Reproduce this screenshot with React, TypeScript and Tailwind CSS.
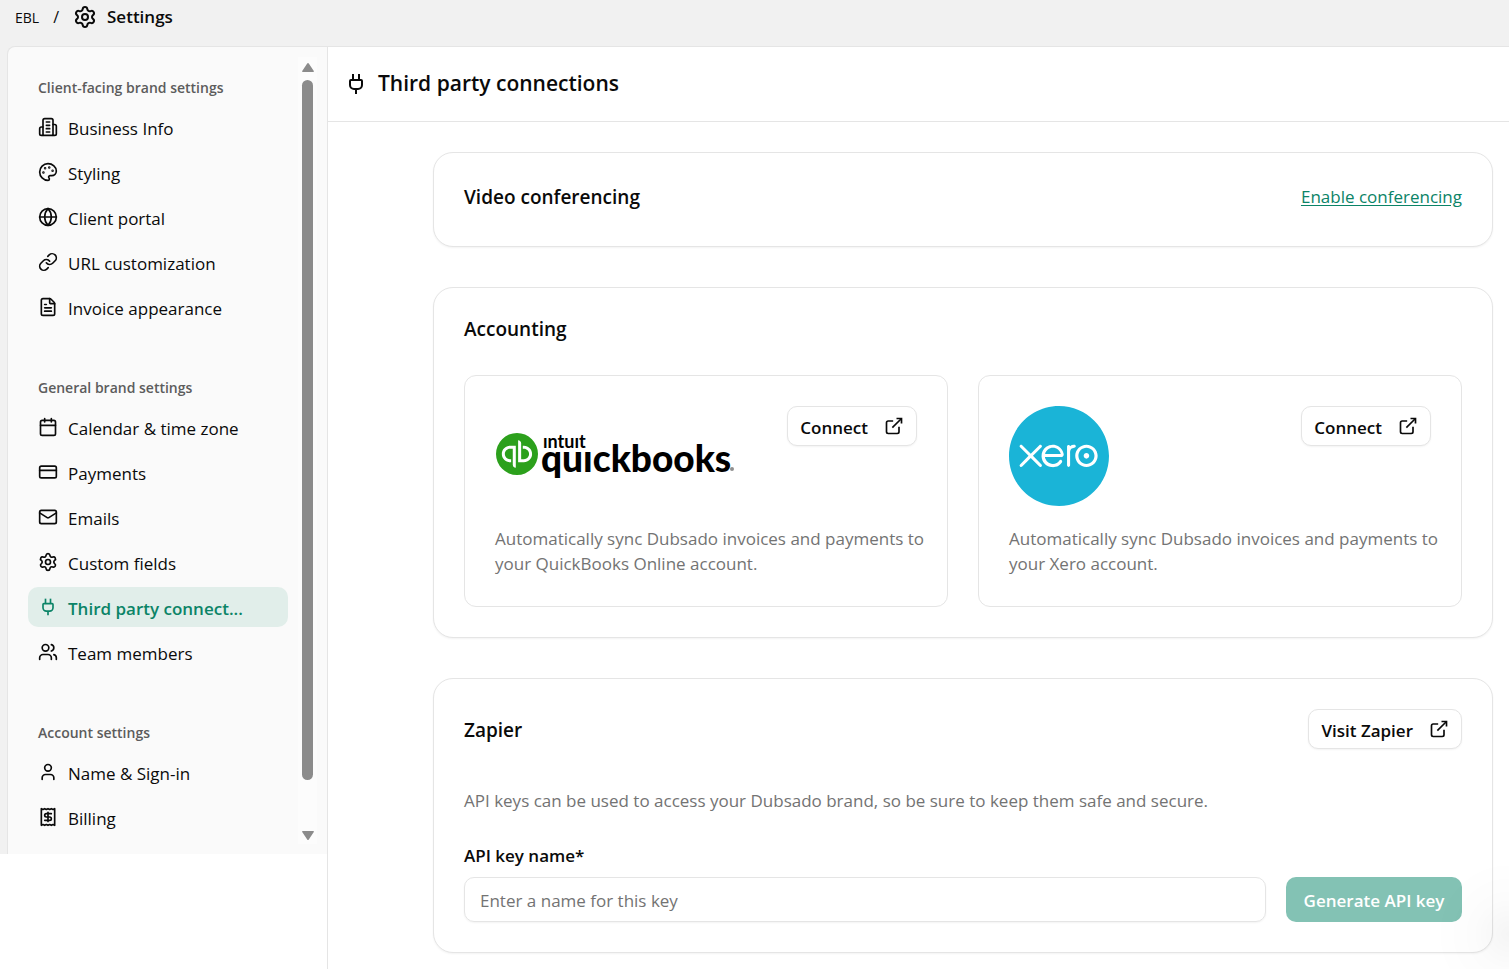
import { useState } from "react";
import {
  Calendar,
  CreditCard,
  ExternalLink,
  FileText,
  Globe,
  Link,
  Mail,
  Plug,
  Receipt,
  Settings,
  User,
  Users,
  type LucideProps,
} from "lucide-react";
import { SiQuickbooks, SiXero } from "react-icons/si";

type NavItem = { name: string; icon: React.ComponentType<LucideProps> };
type NavGroup = { title: string; items: NavItem[] };

const BuildingIcon = ({ className }: LucideProps) => (
  <svg
    viewBox="0 0 24 24"
    fill="none"
    stroke="currentColor"
    strokeWidth="2"
    strokeLinecap="round"
    strokeLinejoin="round"
    className={className}
  >
    <path d="M6 22V4a2 2 0 0 1 2-2h8a2 2 0 0 1 2 2v18Z" />
    <path d="M6 12H4a2 2 0 0 0-2 2v6a2 2 0 0 0 2 2h2" />
    <path d="M18 9h2a2 2 0 0 1 2 2v9a2 2 0 0 1-2 2h-2" />
    <path d="M10 6h4M10 10h4M10 14h4M10 18h4" />
  </svg>
);

const PaletteIcon = ({ className }: LucideProps) => (
  <svg
    viewBox="0 0 24 24"
    fill="none"
    stroke="currentColor"
    strokeWidth="2"
    strokeLinecap="round"
    strokeLinejoin="round"
    className={className}
  >
    <circle cx="13.5" cy="6.5" r=".5" fill="currentColor" />
    <circle cx="17.5" cy="10.5" r=".5" fill="currentColor" />
    <circle cx="8.5" cy="7.5" r=".5" fill="currentColor" />
    <circle cx="6.5" cy="12.5" r=".5" fill="currentColor" />
    <path d="M12 2C6.5 2 2 6.5 2 12s4.5 10 10 10c.926 0 1.648-.746 1.648-1.688 0-.437-.18-.835-.437-1.125-.29-.289-.438-.652-.438-1.125a1.64 1.64 0 0 1 1.668-1.668h1.996c3.051 0 5.555-2.503 5.555-5.554C21.965 6.012 17.461 2 12 2z" />
  </svg>
);

const navGroups: NavGroup[] = [
  {
    title: "Client-facing brand settings",
    items: [
      { name: "Business Info", icon: BuildingIcon },
      { name: "Styling", icon: PaletteIcon },
      { name: "Client portal", icon: Globe },
      { name: "URL customization", icon: Link },
      { name: "Invoice appearance", icon: FileText },
    ],
  },
  {
    title: "General brand settings",
    items: [
      { name: "Calendar & time zone", icon: Calendar },
      { name: "Payments", icon: CreditCard },
      { name: "Emails", icon: Mail },
      { name: "Custom fields", icon: Settings },
      { name: "Third party connect...", icon: Plug },
      { name: "Team members", icon: Users },
    ],
  },
  {
    title: "Account settings",
    items: [
      { name: "Name & Sign-in", icon: User },
      { name: "Billing", icon: Receipt },
    ],
  },
];

const ACTIVE = "Third party connect...";

const Sidebar = () => (
  <aside className="flex rounded-tl-lg border-l border-t border-[#e5e5e5] bg-[#fafafa] py-[10px] pl-5 pr-[10px]">
    <nav className="flex min-w-0 flex-1 flex-col gap-[51px] pb-[7px] pt-[21px]">
      {navGroups.map((group) => (
        <div key={group.title}>
          <h3 className="mb-[9px] pl-[10px] text-[14px] font-semibold leading-5 text-[#5c5c5c]">
            {group.title}
          </h3>
          <ul className="flex flex-col gap-[5px]">
            {group.items.map(({ name, icon: Icon }) => (
              <li key={name}>
                <a
                  href="#"
                  className={`flex h-10 items-center gap-[10px] rounded-[10px] px-[10px] text-[17px] ${
                    name === ACTIVE ? "bg-[#e1eeea] font-semibold text-[#0b8467]" : "text-[#0a0a0a]"
                  }`}
                >
                  <Icon
                    className="size-5 shrink-0"
                    strokeLinecap={Icon === Plug ? "butt" : "round"}
                    strokeLinejoin={Icon === Plug ? "miter" : "round"}
                  />
                  <span className="whitespace-nowrap pt-1">{name}</span>
                </a>
              </li>
            ))}
          </ul>
        </div>
      ))}
    </nav>

    {/* Scroll track */}
    <div className="ml-[10px] flex w-[19px] shrink-0 flex-col items-center bg-[#fcfcfc] pb-1 pt-[6px]">
      <svg viewBox="0 0 12 9" className="h-[9px] w-3 fill-[#8b8b8b]">
        <path d="M6.8.6 11.8 8a.7.7 0 0 1-.6 1H.8a.7.7 0 0 1-.6-1L5.2.6a1 1 0 0 1 1.6 0Z" />
      </svg>
      <div className="mb-[51px] mt-[8px] w-[11px] flex-1 rounded-full bg-[#8b8b8b]" />
      <svg viewBox="0 0 12 9" className="h-[9px] w-3 fill-[#8b8b8b]">
        <path d="M6.8 8.4 11.8 1a.7.7 0 0 0-.6-1H.8a.7.7 0 0 0-.6 1L5.2 8.4a1 1 0 0 0 1.6 0Z" />
      </svg>
    </div>
  </aside>
);

const Card = ({ children }: { children: React.ReactNode }) => (
  <section className="rounded-[20px] border border-[#e5e5e5] bg-white p-[30px] shadow-[0_1px_2px_rgba(0,0,0,0.05)]">
    {children}
  </section>
);

const OutlineButton = ({ label }: { label: string }) => (
  <button className="flex h-10 shrink-0 items-center gap-4 rounded-[10px] border border-[#e5e5e5] bg-white px-3 text-[17px] font-semibold shadow-[0_1px_2px_rgba(0,0,0,0.05)]">
    <span className="pt-1">{label}</span>
    <ExternalLink className="size-5" strokeLinecap="butt" strokeLinejoin="miter" />
  </button>
);

const QuickbooksLogo = () => (
  <div className="flex h-[100px] items-center pb-1">
    <SiQuickbooks className="ml-px size-[42px] shrink-0 text-[#2ca01c]" />
    <svg viewBox="0 0 198 54" className="h-[54px] w-[198px]" aria-label="Intuit QuickBooks">
      <text x="5" y="21" className="font-['Lato'] text-[18px] font-bold">ıntuıt</text>
      <text x="3" y="45" className="font-['Lato'] text-[37px] font-black">quıckbooks</text>
      <circle cx="194" cy="42" r="2" fill="#8f8f8f" />
    </svg>
  </div>
);

const XeroLogo = () => <SiXero className="size-[100px] text-[#1ab4d7]" />;

type IntegrationProps = { logo: React.ReactNode; text: string };

const Integration = ({ logo, text }: IntegrationProps) => (
  <div className="flex flex-col gap-5 rounded-xl border border-[#e5e5e5] py-[30px] pl-[30px] pr-4">
    <div className="flex items-start justify-between pr-[14px]">
      {logo}
      <OutlineButton label="Connect" />
    </div>
    <p className="text-[17px] leading-[25px] text-[#737373]">{text}</p>
  </div>
);

const App = () => {
  const [keyName, setKeyName] = useState("");

  return (
    <div className="min-h-screen bg-white font-['Open_Sans',sans-serif] text-[#0a0a0a]">
      <header className="flex h-[46px] items-center bg-[#f1f1f1] pb-3 pl-[15px]">
        <a href="#" className="text-[14px]">EBL</a>
        <span className="px-[14px] text-[16px]">/</span>
        <Settings className="size-6" />
        <h1 className="pl-[10px] text-[17px] font-semibold">Settings</h1>
      </header>

      <div className="flex min-h-[calc(100vh-46px)]">
        <div className="w-[328px] shrink-0 border-r border-[#e5e5e5]">
          <div className="bg-[#f1f1f1] pl-[7px]">
            <Sidebar />
          </div>
        </div>

        <main className="min-w-0 flex-1 border-t border-[#e5e5e5]">
          <div className="flex h-[75px] items-center border-b border-[#e5e5e5] pl-4">
            <Plug className="size-6" strokeLinecap="butt" strokeLinejoin="miter" />
            <h2 className="pl-[10px] text-[21px] font-semibold">Third party connections</h2>
          </div>

          <div className="flex flex-col gap-10 pb-4 pl-[105px] pr-4 pt-[30px]">
            <Card>
              <div className="flex h-[33px] items-start justify-between leading-7">
                <h3 className="text-[19px] font-semibold">Video conferencing</h3>
                <a href="#" className="text-[17px] text-[#0b8467] underline underline-offset-2">
                  Enable conferencing
                </a>
              </div>
            </Card>

            <Card>
              <h3 className="mb-[35px] text-[19px] font-semibold leading-[22px]">Accounting</h3>
              <div className="grid grid-cols-2 gap-[30px]">
                <Integration
                  logo={<QuickbooksLogo />}
                  text="Automatically sync Dubsado invoices and payments to your QuickBooks Online account."
                />
                <Integration
                  logo={<XeroLogo />}
                  text="Automatically sync Dubsado invoices and payments to your Xero account."
                />
              </div>
            </Card>

            <Card>
              <div className="flex items-center justify-between">
                <h3 className="pt-[2px] text-[19px] font-semibold">Zapier</h3>
                <OutlineButton label="Visit Zapier" />
              </div>
              <p className="mt-[39px] text-[17px] leading-[25px] text-[#737373]">
                API keys can be used to access your Dubsado brand, so be sure to keep them safe and secure.
              </p>
              <label htmlFor="key-name" className="mb-[9px] mt-[30px] block text-[17px] font-semibold leading-[25px]">
                API key name*
              </label>
              <div className="flex gap-5">
                <input
                  id="key-name"
                  type="text"
                  value={keyName}
                  onChange={(e) => setKeyName(e.target.value)}
                  placeholder="Enter a name for this key"
                  className="h-[45px] min-w-0 flex-1 rounded-[10px] border border-[#e5e5e5] px-[15px] pt-[2px] text-[17px] shadow-[0_1px_2px_rgba(0,0,0,0.05)] placeholder:text-[#737373]"
                />
                <button className="h-[45px] w-[176px] shrink-0 rounded-[10px] bg-[#83c2b4] pt-[2px] text-[17px] font-semibold text-white">
                  Generate API key
                </button>
              </div>
            </Card>
          </div>
        </main>
      </div>

      {/* Soft glow of the help launcher past the window edge */}
      <div className="pointer-events-none fixed bottom-0 right-0 h-[140px] w-[80px] bg-[radial-gradient(circle_at_100%_75%,rgba(0,0,0,0.04),rgba(0,0,0,0.01)_36px,transparent_75px)]" />
    </div>
  );
};

export default App;
